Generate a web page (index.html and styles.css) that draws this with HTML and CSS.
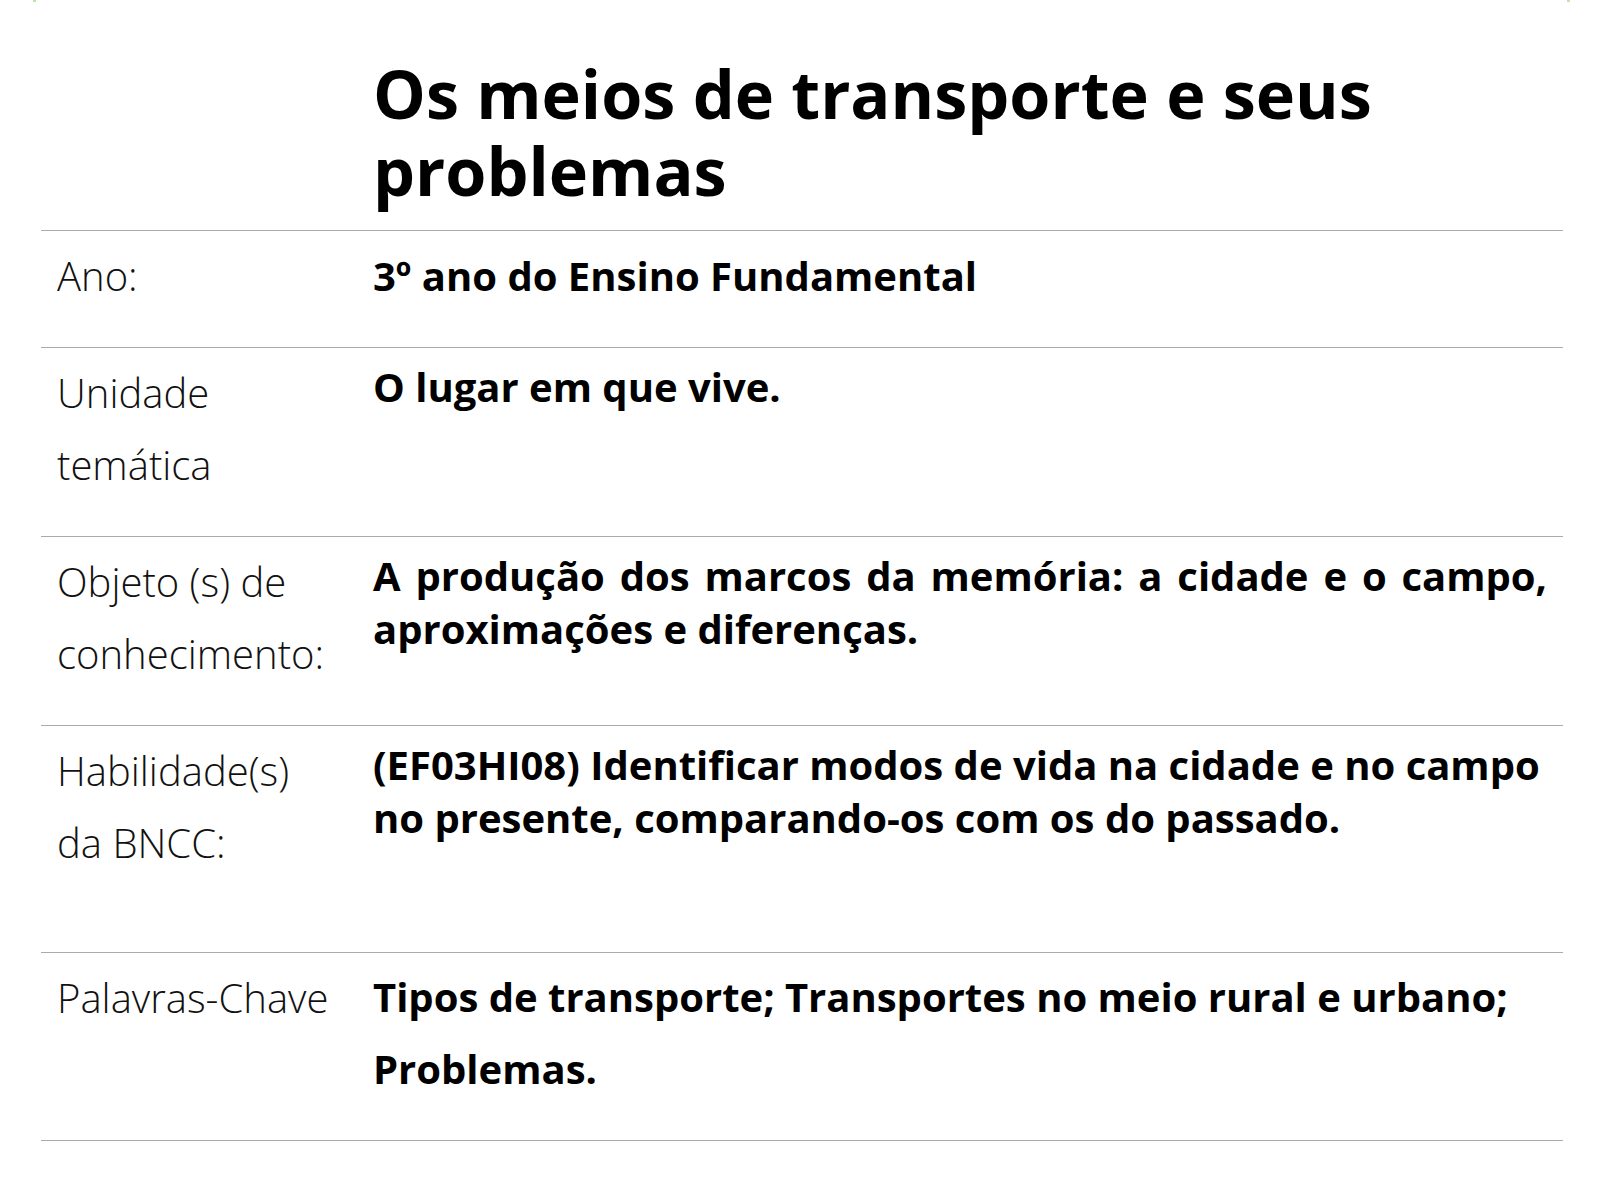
FILE: index.html
```html
<!DOCTYPE html>
<html lang="pt-BR">
<head>
<meta charset="utf-8">
<title>Os meios de transporte e seus problemas</title>
<link rel="stylesheet" href="styles.css">
</head>
<body>
<span class="mark mark-left"></span>
<span class="mark mark-right"></span>
<main class="page">
  <header class="header">
    <h1 class="title">Os meios de transporte e seus problemas</h1>
  </header>
  <section class="table">
    <div class="row row-first">
      <div class="label">Ano:</div>
      <div class="value">3º ano do Ensino Fundamental</div>
    </div>
    <div class="row">
      <div class="label">Unidade<br>temática</div>
      <div class="value">O lugar em que vive.</div>
    </div>
    <div class="row">
      <div class="label">Objeto (s) de<br>conhecimento:</div>
      <div class="value justify">A produção dos marcos da memória: a cidade e o campo, aproximações e diferenças.</div>
    </div>
    <div class="row row-tall">
      <div class="label">Habilidade(s)<br>da BNCC:</div>
      <div class="value">(EF03HI08) Identificar modos de vida na cidade e no campo no presente, comparando-os com os do passado.</div>
    </div>
    <div class="row">
      <div class="label">Palavras-Chave</div>
      <div class="value loose">Tipos de transporte; Transportes no meio rural e urbano; Problemas.</div>
    </div>
  </section>
</main>
</body>
</html>
```

FILE: styles.css
```css
* { box-sizing: border-box; }

html, body {
  margin: 0;
  padding: 0;
  background: #ffffff;
}

body {
  font-family: "Open Sans", "Noto Sans", "DejaVu Sans", sans-serif;
  color: #000000;
  position: relative;
  min-height: 1200px;
}

.mark {
  position: absolute;
  top: 0;
  width: 3px;
  height: 2px;
  background: #bfe3ae;
}
.mark-left { left: 33px; }
.mark-right { left: 1567px; }

.page {
  margin: 0 37px 0 41px;
}

.header {
  padding-left: 332px;
  padding-top: 55px;
  margin-bottom: 21px;
}

.title {
  margin: 0;
  font-size: 66.5px;
  line-height: 77px;
  font-weight: 700;
}

.table {
  border-bottom: 1px solid #aaaaaa;
}

.row {
  display: grid;
  grid-template-columns: 332px 1fr;
  border-top: 1px solid #aaaaaa;
  align-items: start;
}

.label {
  padding: 9px 16px 35px 16px;
  font-size: 40px;
  line-height: 72px;
  font-weight: 300;
  color: #111111;
}

.value {
  padding: 12px 16px 35px 0;
  font-size: 40px;
  line-height: 53px;
  font-weight: 700;
}

.row-first .value { padding-top: 18px; }

.justify { text-align: justify; }

.row-tall .value { padding-bottom: 108px; }

.value.loose {
  padding-top: 8px;
  line-height: 72px;
}
```
